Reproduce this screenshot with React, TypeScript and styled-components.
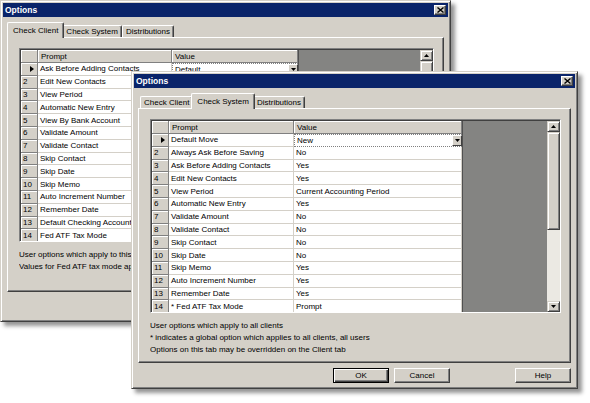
import { Fragment } from "react";
import styled, { createGlobalStyle } from "styled-components";

const GlobalStyle = createGlobalStyle`
  html, body {
    margin: 0;
    padding: 0;
    background: #ffffff;
  }
  body {
    font-family: "Liberation Sans", Arial, sans-serif;
    font-size: 8px;
    color: #000;
  }
`;

const Desktop = styled.div`
  position: relative;
  width: 590px;
  height: 403px;
  overflow: hidden;
  background: #ffffff;
`;

const Window = styled.div<{ $left: number; $top: number; $width: number; $height: number }>`
  position: absolute;
  left: ${(p) => p.$left}px;
  top: ${(p) => p.$top}px;
  width: ${(p) => p.$width}px;
  height: ${(p) => p.$height}px;
  box-sizing: border-box;
  display: flex;
  flex-direction: column;
  padding: 2px;
  background: #d4d0c8;
  border: 1px solid;
  border-color: #d4d0c8 #404040 #404040 #d4d0c8;
  box-shadow: inset 1px 1px 0 #ffffff, inset -1px -1px 0 #808080,
    4px 4px 4px rgba(0, 0, 0, 0.42);
`;

const TitleBar = styled.div`
  height: 14px;
  flex: none;
  display: flex;
  align-items: center;
  justify-content: space-between;
  padding: 0 2px 0 2px;
  background: #0a246a;
`;

const TitleText = styled.span`
  color: #ffffff;
  font-weight: bold;
  font-size: 8.5px;
`;

const CloseButton = styled.div`
  width: 12px;
  height: 10px;
  box-sizing: border-box;
  display: flex;
  align-items: center;
  justify-content: center;
  background: #d4d0c8;
  border: 1px solid;
  border-color: #ffffff #404040 #404040 #ffffff;
  box-shadow: inset -1px -1px 0 #808080;
`;

const Body = styled.div`
  flex: 1;
  display: flex;
  flex-direction: column;
  padding: 5px 4px 0 4px;
`;

const TabStrip = styled.div`
  display: flex;
  align-items: flex-end;
  height: 15px;
  padding-left: 2px;
  position: relative;
  z-index: 1;
`;

const Tab = styled.div<{ $active?: boolean }>`
  box-sizing: border-box;
  height: ${(p) => (p.$active ? 16 : 12)}px;
  margin: ${(p) => (p.$active ? "0 -2px -1px -2px" : "0")};
  padding: ${(p) => (p.$active ? "0 5px" : "0 3px")};
  display: flex;
  align-items: center;
  white-space: nowrap;
  background: #d4d0c8;
  border-top: 1px solid #ffffff;
  border-left: 1px solid #ffffff;
  border-right: 1px solid #404040;
  border-radius: 2px 2px 0 0;
  box-shadow: inset -1px 0 0 #808080;
  position: relative;
  z-index: ${(p) => (p.$active ? 2 : 1)};
`;

const TabPanel = styled.div`
  height: 255px;
  box-sizing: border-box;
  flex: none;
  padding: 10px 9px 0 11px;
  border: 1px solid;
  border-color: #ffffff #404040 #404040 #ffffff;
  box-shadow: inset -1px -1px 0 #808080;
`;

const GridFrame = styled.div`
  height: 194px;
  box-sizing: border-box;
  border: 1px solid;
  border-color: #808080 #ffffff #ffffff #808080;
`;

const GridInner = styled.div`
  height: 100%;
  box-sizing: border-box;
  display: flex;
  border-top: 1px solid #404040;
  border-left: 1px solid #404040;
  overflow: hidden;
`;

const Table = styled.div<{ $promptWidth: number; $valueWidth: number }>`
  flex: none;
  display: grid;
  grid-template-columns: 17px ${(p) => p.$promptWidth}px ${(p) => p.$valueWidth}px;
  grid-template-rows: 13px;
  grid-auto-rows: 12.8px;
  align-content: start;
  background: #ffffff;
`;

const HeadCell = styled.div`
  box-sizing: border-box;
  display: flex;
  align-items: center;
  padding-left: 3px;
  white-space: nowrap;
  overflow: hidden;
  background: #d4d0c8;
  border-right: 1px solid #808080;
  border-bottom: 1px solid #808080;
  box-shadow: inset 1px 1px 0 #ffffff;
`;

const RowHead = styled(HeadCell)<{ $pointer?: boolean }>`
  justify-content: ${(p) => (p.$pointer ? "flex-end" : "flex-start")};
  padding-left: 2px;
  padding-right: ${(p) => (p.$pointer ? 3 : 0)}px;
`;

const DataCell = styled.div`
  box-sizing: border-box;
  display: flex;
  align-items: center;
  padding-left: 2px;
  white-space: nowrap;
  overflow: hidden;
  border-right: 1px solid #d4d0c8;
  border-bottom: 1px solid #d4d0c8;
`;

const EditorCell = styled.div`
  box-sizing: border-box;
  display: flex;
  align-items: center;
  justify-content: space-between;
  padding-left: 2px;
  white-space: nowrap;
  background: #ffffff;
  border: 1px dotted #808080;
  border-right: none;
`;

const DropButton = styled.div`
  width: 10px;
  height: 100%;
  box-sizing: border-box;
  display: flex;
  align-items: center;
  justify-content: center;
  background: #d4d0c8;
  border: 1px solid;
  border-color: #ffffff #404040 #404040 #ffffff;
`;

const GrayFill = styled.div`
  flex: 1;
  background: #848482;
  border-left: 1px solid #505050;
`;

const Scrollbar = styled.div`
  width: 13px;
  flex: none;
  display: flex;
  flex-direction: column;
  background: #ebe9e3;
`;

const ScrollButton = styled.div<{ $height: number }>`
  height: ${(p) => p.$height}px;
  flex: none;
  box-sizing: border-box;
  display: flex;
  align-items: center;
  justify-content: center;
  background: #d4d0c8;
  border: 1px solid;
  border-color: #d4d0c8 #404040 #404040 #d4d0c8;
  box-shadow: inset 1px 1px 0 #ffffff, inset -1px -1px 0 #808080;
`;

const ScrollTrack = styled.div`
  flex: 1;
`;

const Notes = styled.div`
  margin-top: 7px;
  line-height: 12px;
  white-space: nowrap;
  overflow: hidden;
`;

const ButtonRow = styled.div`
  display: flex;
  justify-content: flex-end;
  gap: 5px;
  margin-top: 5px;
`;

const DialogButton = styled.div<{ $default?: boolean; $spaced?: boolean }>`
  width: 56px;
  height: 15px;
  box-sizing: border-box;
  display: flex;
  align-items: center;
  justify-content: center;
  margin-left: ${(p) => (p.$spaced ? 60 : 0)}px;
  background: #d4d0c8;
  border: 1px solid;
  border-color: ${(p) => (p.$default ? "#000000" : "#ffffff #404040 #404040 #ffffff")};
  box-shadow: ${(p) =>
    p.$default
      ? "inset 1px 1px 0 #ffffff, inset -1px -1px 0 #404040, inset -2px -2px 0 #808080"
      : "inset -1px -1px 0 #808080"};
`;

type Dir = "up" | "down" | "right";

const Triangle = ({ dir, size }: { dir: Dir; size: number }) => {
  if (dir === "right") {
    return (
      <svg width={size / 2 + 1} height={size} viewBox={`0 0 ${size / 2 + 1} ${size}`}>
        <polygon points={`0,0 ${size / 2 + 1},${size / 2} 0,${size}`} fill="#000" />
      </svg>
    );
  }
  const h = Math.ceil(size / 2);
  const points = dir === "up" ? `0,${h} ${size / 2},0 ${size},${h}` : `0,0 ${size},0 ${size / 2},${h}`;
  return (
    <svg width={size} height={h} viewBox={`0 0 ${size} ${h}`}>
      <polygon points={points} fill="#000" />
    </svg>
  );
};

const CloseIcon = () => (
  <svg width="7" height="6" viewBox="0 0 7 6">
    <path d="M0.5 0.5 L6.5 5.5 M6.5 0.5 L0.5 5.5" stroke="#000" strokeWidth="1.4" />
  </svg>
);

type GridRow = { prompt: string; value: string };

type OptionsGridProps = {
  rows: GridRow[];
  promptWidth: number;
  valueWidth: number;
};

const OptionsGrid = ({ rows, promptWidth, valueWidth }: OptionsGridProps) => (
  <GridFrame>
    <GridInner>
      <Table $promptWidth={promptWidth} $valueWidth={valueWidth}>
        <HeadCell />
        <HeadCell>Prompt</HeadCell>
        <HeadCell>Value</HeadCell>
        {rows.map((row, index) => (
          <Fragment key={index}>
            {index === 0 ? (
              <RowHead $pointer>
                <Triangle dir="right" size={6} />
              </RowHead>
            ) : (
              <RowHead>{index + 1}</RowHead>
            )}
            <DataCell>{row.prompt}</DataCell>
            {index === 0 ? (
              <EditorCell>
                <span>{row.value}</span>
                <DropButton>
                  <Triangle dir="down" size={5} />
                </DropButton>
              </EditorCell>
            ) : (
              <DataCell>{row.value}</DataCell>
            )}
          </Fragment>
        ))}
      </Table>
      <GrayFill />
      <Scrollbar>
        <ScrollButton $height={11}>
          <Triangle dir="up" size={5} />
        </ScrollButton>
        <ScrollButton $height={98} />
        <ScrollTrack />
        <ScrollButton $height={11}>
          <Triangle dir="down" size={5} />
        </ScrollButton>
      </Scrollbar>
    </GridInner>
  </GridFrame>
);

const tabs = ["Check Client", "Check System", "Distributions"];

type OptionsDialogProps = {
  left: number;
  top: number;
  width: number;
  height: number;
  activeTab: number;
  rows: GridRow[];
  promptWidth: number;
  valueWidth: number;
  notes: string[];
};

const OptionsDialog = (props: OptionsDialogProps) => (
  <Window $left={props.left} $top={props.top} $width={props.width} $height={props.height}>
    <TitleBar>
      <TitleText>Options</TitleText>
      <CloseButton>
        <CloseIcon />
      </CloseButton>
    </TitleBar>
    <Body>
      <TabStrip>
        {tabs.map((tab, index) => (
          <Tab key={tab} $active={index === props.activeTab}>
            {tab}
          </Tab>
        ))}
      </TabStrip>
      <TabPanel>
        <OptionsGrid rows={props.rows} promptWidth={props.promptWidth} valueWidth={props.valueWidth} />
        <Notes>
          {props.notes.map((line) => (
            <div key={line}>{line}</div>
          ))}
        </Notes>
      </TabPanel>
      <ButtonRow>
        <DialogButton $default>OK</DialogButton>
        <DialogButton>Cancel</DialogButton>
        <DialogButton $spaced>Help</DialogButton>
      </ButtonRow>
    </Body>
  </Window>
);

// values of the client tab below the first row sit behind the second dialog
const clientRows: GridRow[] = [
  { prompt: "Ask Before Adding Contacts", value: "Default" },
  { prompt: "Edit New Contacts", value: "" },
  { prompt: "View Period", value: "" },
  { prompt: "Automatic New Entry", value: "" },
  { prompt: "View By Bank Account", value: "" },
  { prompt: "Validate Amount", value: "" },
  { prompt: "Validate Contact", value: "" },
  { prompt: "Skip Contact", value: "" },
  { prompt: "Skip Date", value: "" },
  { prompt: "Skip Memo", value: "" },
  { prompt: "Auto Increment Number", value: "" },
  { prompt: "Remember Date", value: "" },
  { prompt: "Default Checking Account", value: "" },
  { prompt: "Fed ATF Tax Mode", value: "" },
];

const systemRows: GridRow[] = [
  { prompt: "Default Move", value: "New" },
  { prompt: "Always Ask Before Saving", value: "No" },
  { prompt: "Ask Before Adding Contacts", value: "Yes" },
  { prompt: "Edit New Contacts", value: "Yes" },
  { prompt: "View Period", value: "Current Accounting Period" },
  { prompt: "Automatic New Entry", value: "Yes" },
  { prompt: "Validate Amount", value: "No" },
  { prompt: "Validate Contact", value: "No" },
  { prompt: "Skip Contact", value: "No" },
  { prompt: "Skip Date", value: "No" },
  { prompt: "Skip Memo", value: "Yes" },
  { prompt: "Auto Increment Number", value: "Yes" },
  { prompt: "Remember Date", value: "Yes" },
  { prompt: "* Fed ATF Tax Mode", value: "Prompt" },
];

export default function App() {
  return (
    <>
      <GlobalStyle />
      <Desktop>
        <OptionsDialog
          left={0}
          top={0}
          width={451}
          height={322}
          activeTab={0}
          rows={clientRows}
          promptWidth={134}
          valueWidth={126}
          notes={["User options which apply to this client", "Values for Fed ATF tax mode apply"]}
        />
        <OptionsDialog
          left={131}
          top={71}
          width={447}
          height={318}
          activeTab={1}
          rows={systemRows}
          promptWidth={125}
          valueWidth={168}
          notes={[
            "User options which apply to all clients",
            "* indicates a global option which applies to all clients, all users",
            "Options on this tab may be overridden on the Client tab",
          ]}
        />
      </Desktop>
    </>
  );
}
